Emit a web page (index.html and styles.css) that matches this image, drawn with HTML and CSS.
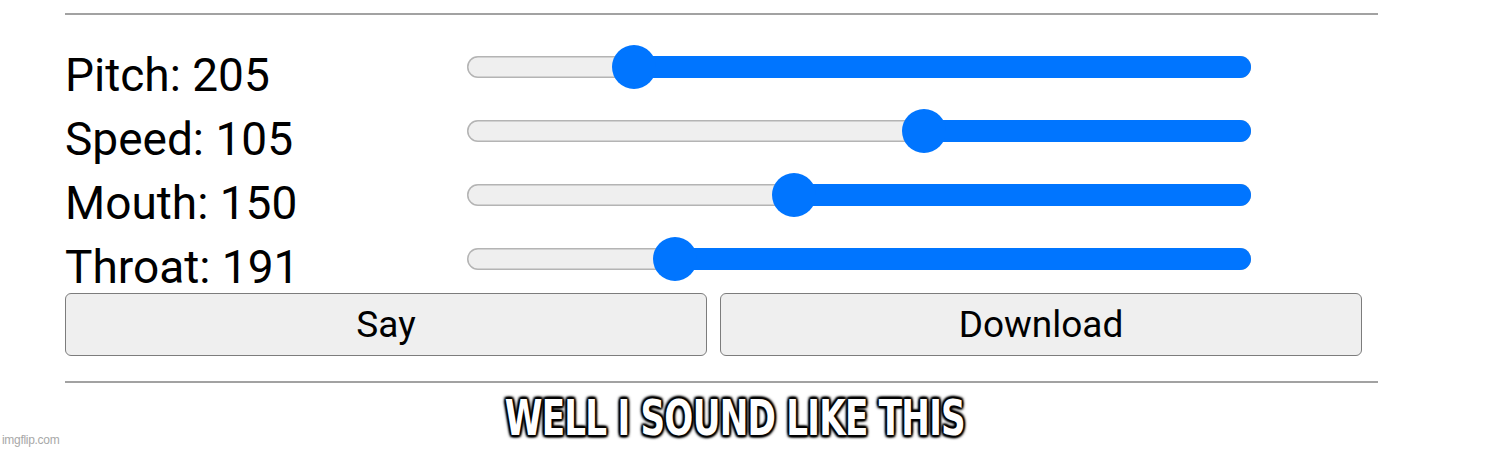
FILE: index.html
```html
<html>

<head>
    <title>SAM Voice</title>
    <link rel="stylesheet" href="styles.css">
</head>

<body>
    <div class="page">
        <hr class="rule">

        <div class="controls">
            <div class="row">
                <span class="label">Pitch: 205</span>
                <div class="track">
                    <div class="fill" style="width: 617px"></div>
                    <div class="thumb" style="left: 145px"></div>
                </div>
            </div>
            <div class="row">
                <span class="label">Speed: 105</span>
                <div class="track">
                    <div class="fill" style="width: 327px"></div>
                    <div class="thumb" style="left: 435px"></div>
                </div>
            </div>
            <div class="row">
                <span class="label">Mouth: 150</span>
                <div class="track">
                    <div class="fill" style="width: 457px"></div>
                    <div class="thumb" style="left: 305px"></div>
                </div>
            </div>
            <div class="row">
                <span class="label">Throat: 191</span>
                <div class="track">
                    <div class="fill" style="width: 576px"></div>
                    <div class="thumb" style="left: 186px"></div>
                </div>
            </div>
        </div>

        <div class="buttons">
            <button class="btn">Say</button>
            <button class="btn">Download</button>
        </div>

        <hr class="rule bottom">
    </div>

    <div class="caption"><span class="caption-text">WELL I SOUND LIKE THIS</span></div>
    <span class="watermark">imgflip.com</span>
</body>

</html>
```

FILE: styles.css
```css
body {
    margin: 0;
    background: #fff;
    font-family: Roboto, "Noto Sans", sans-serif;
    color: #000;
    position: relative;
    height: 451px;
    overflow: hidden;
}

.page {
    width: 1313px;
    padding: 13px 0 0 65px;
}

.rule {
    margin: 0;
    height: 0;
    border: none;
    border-top: 2px solid #a2a2a2;
}

.controls {
    margin-top: 34px;
    display: flex;
    flex-direction: column;
    gap: 12px;
}

.row {
    display: flex;
    align-items: flex-start;
    height: 52px;
}

.label {
    width: 402px;
    font-size: 46px;
    line-height: 52px;
    white-space: nowrap;
}

/* slider runs right-to-left, so the filled part sits on the right */
.track {
    position: relative;
    margin-top: 7px;
    width: 784px;
    height: 22px;
    border-radius: 11px;
    background: #efefef;
    box-shadow: inset 0 0 0 1.5px #b4b4b4;
}

.fill {
    position: absolute;
    top: 0;
    right: 0;
    bottom: 0;
    border-radius: 11px;
    background: #0075ff;
}

.thumb {
    position: absolute;
    top: -11px;
    width: 44px;
    height: 44px;
    border-radius: 50%;
    background: #0075ff;
}

.buttons {
    display: flex;
    gap: 13px;
    width: 1297px;
}

.btn {
    width: 642px;
    height: 63px;
    border: 1.5px solid #7c7c7c;
    border-radius: 6px;
    background: #efefef;
    font-family: Roboto, "Noto Sans", sans-serif;
    font-size: 37px;
    color: #000;
    padding: 0;
}

.rule.bottom {
    margin-top: 25px;
}

.caption {
    margin: 10px 0 0;
    padding-right: 32px;
    text-align: center;
    line-height: 50px;
}

.caption-text {
    display: inline-block;
    transform: scaleX(0.76);
    font-family: "DejaVu Sans Condensed", sans-serif;
    font-weight: bold;
    font-size: 50px;
    letter-spacing: -1px;
    color: #fff;
    text-shadow:
        2px 2px 3px #000, -2px -2px 3px #000,
        2px -2px 3px #000, -2px 2px 3px #000,
        0 2px 2px #000, 0 -2px 2px #000,
        2px 0 2px #000, -2px 0 2px #000;
}

.watermark {
    position: absolute;
    left: 2px;
    bottom: 4px;
    font-family: "Liberation Sans", sans-serif;
    font-size: 12px;
    letter-spacing: -0.3px;
    color: #a8a8a8;
}
```
